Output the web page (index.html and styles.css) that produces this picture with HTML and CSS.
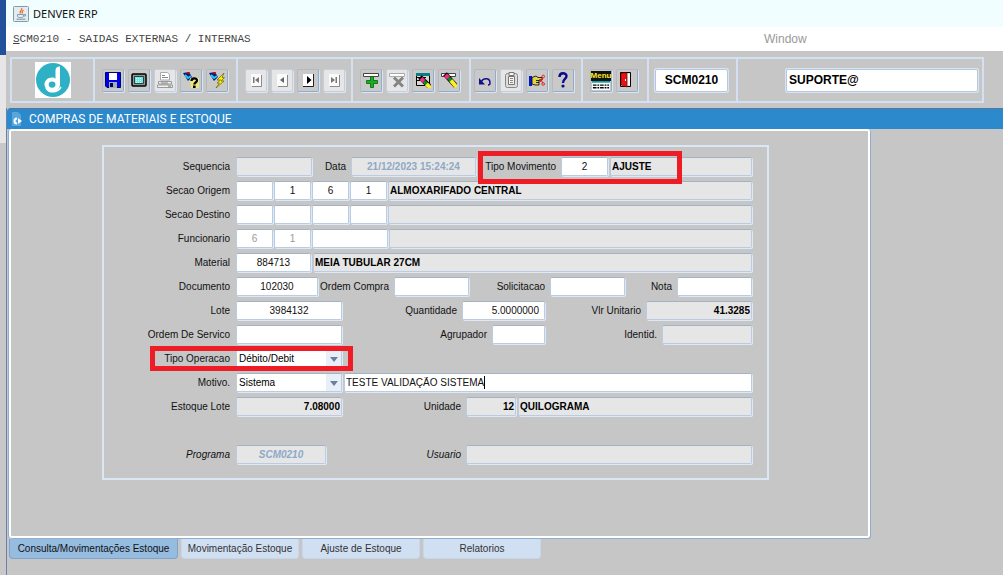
FILE: index.html
```html
<!DOCTYPE html>
<html lang="pt-BR">
<head>
  <meta charset="UTF-8">
  <meta name="viewport" content="width=device-width, initial-scale=1.0">
  <title>DENVER ERP</title>
  <link rel="stylesheet" href="styles.css">
</head>
<body>
  <div class="desktop"></div>
  <div class="window">
    <header class="title-bar">
      <svg class="java-icon" viewBox="0 0 16 16">
        <rect x="0.5" y="0.5" width="15" height="15" rx="1" fill="#e4ebf1" stroke="#8899a8"/>
        <path d="M8.500 2c1.500 2-3 2.800-1 5.500M10.500 4c-2 1.200-1.800 2-1 3.500" fill="none" stroke="#e8762c" stroke-width="1.300"/>
        <path d="M4.500 8.500h6v1.500c0 1-1 1.500-2 1.500H6.500c-1 0-2-.5-2-1.500zM11 8.500h1.500v1.500H11" fill="none" stroke="#7892a6" stroke-width=".9"/>
        <path d="M3.500 13.200h9" stroke="#7892a6"/>
      </svg>
      <span>DENVER ERP</span>
    </header>

    <nav class="menu-bar">
      <a class="menu-form" href="#"><u>S</u>CM0210 - SAIDAS EXTERNAS / INTERNAS</a>
      <a class="menu-window" href="#">Window</a>
    </nav>

    <div class="toolbar">
      <div class="group group-logo">
        <svg class="logo" viewBox="0 0 36 36">
          <rect width="36" height="36" fill="#fff"/>
          <circle cx="18" cy="18" r="17" fill="#2fb1c5"/>
          <path d="M25 4.500V22c0 5-3.500 7.500-7.500 7.500S9.500 26.700 9.500 22.500s3.500-7 7.500-7c1.500 0 2.500.4 3.500 1.200V8.500c0-2.500 1.500-4 4.500-4z" fill="#fff"/>
          <path d="M17 19.500c2.200 0 3.500 1.200 3.500 3 0 2-1.500 3.300-3.500 3.300s-3.300-1.300-3.300-3.200 1.300-3.100 3.300-3.100z" fill="#2fb1c5"/>
          <path d="M11 26c3 5 11 5.500 15-1" fill="none" stroke="#fff" stroke-width="1.500"/>
        </svg>
      </div>

      <div class="group group-file">
        <button class="tool" aria-label="Salvar">
          <svg viewBox="0 0 16 16"><path d="M.5.500h15v15H2l-1.500-1.500z" fill="#0000e8" stroke="#000070"/><path d="M4 1h8v7H4z" fill="#fff"/><path d="M4 10h8v6H4z" fill="#9fb0b8"/><path d="M5 11h3v4H5z" fill="#000050"/></svg>
        </button>
        <button class="tool" aria-label="Tela">
          <svg viewBox="0 0 16 16"><rect x="1" y="2" width="14" height="12" rx="1" fill="#8c9694" stroke="#000" stroke-width="1.500"/><path d="M3.500 4.500h9v7h-9z" fill="#6eeae6" stroke="#222" stroke-width=".8"/><path d="M5 6.500h6M5 8.500h6M5 10.500h6" stroke="#d8ffff" stroke-dasharray="1 1"/></svg>
        </button>
        <button class="tool" aria-label="Imprimir" disabled>
          <svg viewBox="0 0 16 16"><path d="M3.500.500h7l2 2V8h-9z" fill="#fff" stroke="#aaa"/><path d="M5 3.500h3M5 5.500h6" stroke="#888"/><path d="M1.500 9.500h13V12h-13zM.5 13h15v2.500H.5z" fill="#f2f2f2" stroke="#999"/><path d="M4 11h7M11 14.200h3" stroke="#888"/></svg>
        </button>
        <button class="tool" aria-label="Entrar consulta">
          <svg viewBox="0 0 16 16"><path d="M0 1l6-1 3 5-4 4z" fill="#081d7b"/><path d="M2 3l3 3 3-2" stroke="#27c9ef" stroke-width="2" fill="none"/><path d="M4 1h3" stroke="#e00" stroke-width="1.500"/><path d="M7 6h9v10H8z" fill="#efe87c"/><path d="M8.500 9c0-3.500 5.500-3.500 5.500-.5 0 2-2.700 2-2.700 4" fill="none" stroke="#000" stroke-width="2.200"/><path d="M10 13.500h2.600V16H10z"/></svg>
        </button>
        <button class="tool" aria-label="Executar consulta">
          <svg viewBox="0 0 16 16"><path d="M0 1l6-1 3 5-4 4z" fill="#081d7b"/><path d="M2 3l3 3 3-2" stroke="#27c9ef" stroke-width="2" fill="none"/><path d="M4 1h3" stroke="#e00" stroke-width="1.500"/><path d="M15 1L8 8h3.500L8 11h2.500L7 16l8-7h-3l3.500-3.500H13z" fill="#ffed00" stroke="#6c6200" stroke-width=".7"/></svg>
        </button>
      </div>

      <div class="group group-nav">
        <button class="tool" aria-label="Primeiro" disabled>
          <svg viewBox="0 0 16 16"><path d="M3 2h10v12H3z" fill="#fafafa"/><path d="M13.500 3v11.500H4" fill="none" stroke="#8b8b8b"/><path d="M5 5h1.500v6H5zM11 5v6L7 8z" fill="#777"/></svg>
        </button>
        <button class="tool" aria-label="Anterior" disabled>
          <svg viewBox="0 0 16 16"><path d="M3 2h10v12H3z" fill="#fafafa"/><path d="M13.500 3v11.500H4" fill="none" stroke="#8b8b8b"/><path d="M10 5v6L6 8z" fill="#666"/></svg>
        </button>
        <button class="tool" aria-label="Proximo">
          <svg viewBox="0 0 16 16"><path d="M3 2h10v12H3z" fill="#fff"/><path d="M13.500 2v12.500H3" fill="none" stroke="#222"/><path d="M7 4v8l4.500-4z"/></svg>
        </button>
        <button class="tool" aria-label="Ultimo" disabled>
          <svg viewBox="0 0 16 16"><path d="M3 2h10v12H3z" fill="#fafafa"/><path d="M13.500 3v11.500H4" fill="none" stroke="#8b8b8b"/><path d="M5 5v6l4-3zM9.500 5H11v6H9.500z" fill="#777"/></svg>
        </button>
      </div>

      <div class="group group-record">
        <button class="tool" aria-label="Inserir registro">
          <svg viewBox="0 0 16 16"><path d="M.5 1.500h15v3H.5z" fill="#fff" stroke="#444"/><path d="M7.500 4.500h3v4h4v3h-4v4h-3v-4h-4v-3h4z" fill="#18b020" stroke="#04640a" stroke-width=".8"/></svg>
        </button>
        <button class="tool" aria-label="Remover registro" disabled>
          <svg viewBox="0 0 16 16"><path d="M.5 1.500h15v3H.5z" fill="#fff" stroke="#aaa"/><path d="M5 5.500l9 9M14 5.500l-9 9" stroke="#858585" stroke-width="3"/></svg>
        </button>
        <button class="tool" aria-label="Limpar tela">
          <svg viewBox="0 0 16 16"><path d="M1.500 1.500h13v12h-13z" fill="#d8d8d8" stroke="#000"/><path d="M1 1h14v3H1z" fill="#087d83"/><path d="M1 5.500h10M1 8.500h5" stroke="#000"/><path d="M5 5l10 10" stroke="#000" stroke-width="5"/><path d="M6 6.500l3 3" stroke="#f02b80" stroke-width="4"/><path d="M9 9.500l3 3" stroke="#098d27" stroke-width="3.500"/><path d="M11.500 12l4 4" stroke="#ffed27" stroke-width="4"/></svg>
        </button>
        <button class="tool" aria-label="Limpar registro">
          <svg viewBox="0 0 16 16"><path d="M.5 1.500h14v3H.5z" fill="#fff" stroke="#444"/><path d="M4 2l11 12" stroke="#000" stroke-width="5"/><path d="M4.500 3l3 3" stroke="#f02b80" stroke-width="4"/><path d="M7.500 6l3 3" stroke="#098d27" stroke-width="3.500"/><path d="M10 8.500l5.500 6.500" stroke="#ffed27" stroke-width="4"/></svg>
        </button>
      </div>

      <div class="group group-edit">
        <button class="tool" aria-label="Desfazer">
          <svg viewBox="0 0 16 16"><path d="M4 10.500c2-5 9-5 9 .5 0 1.500-1 2-2 2" fill="none" stroke="#10108a" stroke-width="1.500"/><path d="M2 6v6.500h6z" fill="#10108a"/></svg>
        </button>
        <button class="tool" aria-label="Colar" disabled>
          <svg viewBox="0 0 16 16"><rect x="2.500" y="1.500" width="12" height="14" rx="2" fill="#ddd" stroke="#888"/><path d="M5.500 4.500h6v8h-6zM6 .5h5v3H6z" fill="#f5f5f5" stroke="#777"/><path d="M7 6.500h3M7 8.500h3M7 10.500h3" stroke="#888"/></svg>
        </button>
        <button class="tool" aria-label="Lista de valores">
          <svg viewBox="0 0 16 16"><path d="M0 4h3v10H0z" fill="#0018c4"/><path d="M3 5.500l4-1.500 2 1.500h4v2.500h-3v5H6l-3-1z" fill="#e2d24a" stroke="#000" stroke-width=".8"/><path d="M7 8.500h3M7 10.500h3" stroke="#000" stroke-width=".8"/><path d="M11 10l3-4M11 7l3 4" stroke="#d11"/><circle cx="14.200" cy="4.500" r="1.300" fill="none" stroke="#e22"/><circle cx="14.200" cy="12" r="1.300" fill="none" stroke="#e22"/></svg>
        </button>
        <button class="tool" aria-label="Ajuda">
          <svg viewBox="0 0 16 16"><path d="M4.500 5c0-5 7-4.500 7-1 0 3-3.500 3-3.500 7" fill="none" stroke="#0b0b8c" stroke-width="2.400"/><circle cx="8" cy="14" r="1.600" fill="#0b0b8c"/></svg>
        </button>
      </div>

      <div class="group group-exit">
        <button class="tool tool-menu" aria-label="Menu">
          <span>Menu</span>
          <svg viewBox="0 0 20 10"><path d="M0 0h20v2H0z" fill="#0ba0a5"/><path d="M0 2h20v8H0z" fill="#fff"/><path d="M1 4.500h18M1 7.500h18" stroke="#000" stroke-width="1.500" stroke-dasharray="4 1 2 1"/></svg>
        </button>
        <button class="tool" aria-label="Sair">
          <svg viewBox="0 0 16 16"><path d="M1.500 .5h10v14h-10z" fill="#ddd" stroke="#000"/><path d="M2 1h6v14l-6-2z" fill="#e81212" stroke="#700" stroke-width=".6"/><path d="M6.500 7v2" stroke="#fff"/><path d="M9 2h2v11H9z" fill="#fff"/></svg>
        </button>
      </div>

      <div class="group group-program">
        <input class="status" type="text" aria-label="Programa atual" value="SCM0210">
      </div>
      <div class="group group-user">
        <input class="status" type="text" aria-label="Usuario atual" value="SUPORTE@">
      </div>
    </div>

    <main class="module">
      <div class="module-title">
        <svg viewBox="0 0 12 14"><path d="M1 0h6l3 3v11H1z" fill="#58a6dc"/><path d="M6 5.500a3.500 3.500 0 1 0 0 7V10.500a1.500 1.500 0 1 1 0-3zM7 6l4 3-4 3z" fill="#fff"/></svg>
        <h1>COMPRAS DE MATERIAIS E ESTOQUE</h1>
      </div>

      <section class="tab-panel">
        <form class="form">
          <div class="row">
            <label class="main" for="sequencia">Sequencia</label>
            <input id="sequencia" class="w76" type="text" readonly>
            <label class="l35" for="data">Data</label>
            <input id="data" class="w125 bold faded center" type="text" value="21/12/2023 15:24:24" readonly>
            <div class="marked fill">
              <label class="l81" for="tipo-mov">Tipo Movimento</label>
              <input id="tipo-mov" class="w47 center" type="text" value="2">
              <input class="fill bold" type="text" aria-label="Descricao do movimento" value="AJUSTE" readonly>
              <span class="mark mark-movimento"></span>
            </div>
          </div>

          <div class="row section">
            <label class="main" for="origem">Secao Origem</label>
            <input id="origem" class="w37" type="text">
            <input class="w37 center" type="text" aria-label="Origem 2" value="1">
            <input class="w37 center" type="text" aria-label="Origem 3" value="6">
            <input class="w37 center" type="text" aria-label="Origem 4" value="1">
            <input class="fill bold" type="text" aria-label="Nome da origem" value="ALMOXARIFADO CENTRAL" readonly>
          </div>

          <div class="row section">
            <label class="main" for="destino">Secao Destino</label>
            <input id="destino" class="w37" type="text">
            <input class="w37" type="text" aria-label="Destino 2">
            <input class="w37" type="text" aria-label="Destino 3">
            <input class="w37" type="text" aria-label="Destino 4">
            <input class="fill" type="text" aria-label="Nome do destino" readonly>
          </div>

          <div class="row section">
            <label class="main" for="funcionario">Funcionario</label>
            <input id="funcionario" class="w37 center dim" type="text" value="6">
            <input class="w37 center dim" type="text" aria-label="Funcionario 2" value="1">
            <input class="w76" type="text" aria-label="Funcionario 3">
            <input class="fill" type="text" aria-label="Nome do funcionario" readonly>
          </div>

          <div class="row">
            <label class="main" for="material">Material</label>
            <input id="material" class="w75 center" type="text" value="884713">
            <input class="fill bold" type="text" aria-label="Nome do material" value="MEIA TUBULAR 27CM" readonly>
          </div>

          <div class="row">
            <label class="main" for="documento">Documento</label>
            <input id="documento" class="w82 center" type="text" value="102030">
            <label class="l72" for="ordem-compra">Ordem Compra</label>
            <input id="ordem-compra" class="w75" type="text">
            <label class="l77" for="solicitacao">Solicitacao</label>
            <input id="solicitacao" class="w75" type="text">
            <label class="l48" for="nota">Nota</label>
            <input id="nota" class="fill" type="text">
          </div>

          <div class="row">
            <label class="main" for="lote">Lote</label>
            <input id="lote" class="w106 center" type="text" value="3984132">
            <label class="l116" for="quantidade">Quantidade</label>
            <input id="quantidade" class="w83 right padded" type="text" value="5.0000000">
            <label class="l97" for="vlr">Vlr Unitario</label>
            <input id="vlr" class="fill bold right" type="text" value="41.3285" readonly>
          </div>

          <div class="row">
            <label class="main" for="ordem-servico">Ordem De Servico</label>
            <input id="ordem-servico" class="w106" type="text">
            <label class="l146" for="agrupador">Agrupador</label>
            <input id="agrupador" class="w53" type="text">
            <label class="l113" for="identid">Identid.</label>
            <input id="identid" class="fill" type="text" readonly>
          </div>

          <div class="row">
            <div class="marked">
              <label class="main" for="operacao">Tipo Operacao</label>
              <div class="combo w106">
                <select id="operacao"><option>Débito/Debit</option></select>
              </div>
              <span class="mark mark-operacao"></span>
            </div>
          </div>

          <div class="row">
            <label class="main" for="motivo">Motivo.</label>
            <div class="combo w106">
              <select id="motivo"><option>Sistema</option></select>
            </div>
            <div class="editing fill">
              <input class="fill" type="text" aria-label="Descricao do motivo" value="TESTE VALIDAÇÃO SISTEMA">
              <span class="caret"></span>
            </div>
          </div>

          <div class="row">
            <label class="main" for="estoque">Estoque Lote</label>
            <input id="estoque" class="w106 bold right" type="text" value="7.08000" readonly>
            <label class="l120" for="unidade">Unidade</label>
            <input id="unidade" class="w50 bold right" type="text" value="12" readonly>
            <input class="fill bold" type="text" aria-label="Nome da unidade" value="QUILOGRAMA" readonly>
          </div>

          <div class="row audit">
            <label class="main" for="programa">Programa</label>
            <input id="programa" class="w90 bold faded center" type="text" value="SCM0210" readonly>
            <label class="l136" for="usuario">Usuario</label>
            <input id="usuario" class="fill" type="text" readonly>
          </div>
        </form>
      </section>

      <div class="tabs" role="tablist">
        <button class="tab active" role="tab" aria-selected="true">Consulta/Movimentações Estoque</button>
        <button class="tab" role="tab">Movimentação Estoque</button>
        <button class="tab" role="tab">Ajuste de Estoque</button>
        <button class="tab" role="tab">Relatorios</button>
      </div>
    </main>
  </div>
</body>
</html>
```

FILE: styles.css
```css
* {
  box-sizing: border-box;
}

body {
  margin: 0;
  min-height: 100vh;
  display: flex;
  background: #c6c6c6;
  font-family: "Liberation Sans", Arial, sans-serif;
  font-size: 10px;
  color: #111;
}

button, input, select {
  font: inherit;
  color: inherit;
  margin: 0;
}

a {
  color: inherit;
  text-decoration: none;
}

/* strip of the desktop behind the window */
.desktop {
  width: 6px;
  background: linear-gradient(#22509a 0 55px, #e6e6e6 55px 143px, #c8c8ca 143px);
}

.window {
  flex: 1;
  min-width: 0;
  display: flex;
  flex-direction: column;
}

.title-bar {
  height: 27px;
  display: flex;
  align-items: center;
  gap: 4px;
  padding-left: 7px;
  background: #f0feff;
  font-family: "Noto Sans", sans-serif;
  font-size: 11px;
}

.java-icon {
  width: 16px;
  height: 16px;
}

.menu-bar {
  height: 24px;
  display: flex;
  align-items: center;
  background: #fff;
}

.menu-form {
  width: 758px;
  padding-left: 7px;
  font-family: "Liberation Mono", monospace;
  font-size: 11px;
  color: #444;
}

.menu-window {
  font-size: 12px;
  color: #999;
}

/* toolbar */
.toolbar {
  height: 46px;
  margin: 6px 19px 5px 4px;
  display: flex;
  border: 2px solid #d3e0f1;
}

.group {
  display: flex;
  align-items: center;
  gap: 4px;
  border-right: 2px solid #d3e0f1;
}

.group-logo {
  width: 83px;
  justify-content: center;
}

.logo {
  width: 36px;
  height: 36px;
}

.group-file {
  width: 143px;
  padding-left: 7px;
}

.group-nav {
  width: 115px;
  padding-left: 7px;
}

.group-record {
  width: 118px;
  padding-left: 7px;
}

.group-edit {
  width: 112px;
  padding-left: 3px;
}

.group-exit {
  width: 66px;
  padding-left: 7px;
}

.group-program {
  width: 89px;
  padding: 0 8px 0 6px;
}

.group-user {
  flex: 1;
  padding: 0 4px 0 48px;
  border-right: 0;
}

.tool {
  width: 22px;
  height: 23px;
  padding: 1px;
  display: flex;
  flex-direction: column;
  align-items: center;
  justify-content: center;
  background: #c9c9c9;
  border: 1px solid #b4bac2;
  border-right-color: #8faccd;
  border-bottom-color: #8faccd;
  border-radius: 2px;
  box-shadow: 1px 1px 0 #dbe6f4;
}

.tool:disabled {
  background: #e6e6e6;
  border-color: #c3cfdf;
}

.tool svg {
  width: 16px;
  height: 16px;
}

.tool-menu span {
  background: #111;
  color: #ffee20;
  font-size: 8px;
  font-weight: bold;
  line-height: 10px;
}

.tool-menu svg {
  width: 20px;
  height: 10px;
}

.status {
  width: 100%;
  height: 23px;
  padding: 0 2px;
  border: 1px solid #b5c8df;
  border-radius: 2px;
  box-shadow: 0 0 0 1px #d9e5f4;
  font-size: 12px;
  font-weight: bold;
  color: #000;
}

.group-program .status {
  text-align: center;
}

/* module window */
.module {
  flex: 1;
  border-left: 1px solid #6883a8;
}

.module-title {
  height: 21px;
  display: flex;
  align-items: center;
  gap: 6px;
  padding-left: 4px;
  background: #2c89cb;
  border-top: 1px solid #55779c;
  border-top-left-radius: 4px;
  color: #fff;
}

.module-title svg {
  width: 12px;
  height: 14px;
}

h1 {
  margin: 0;
  font-family: Roboto, sans-serif;
  font-size: 12px;
  font-weight: normal;
}

.tab-panel {
  margin-right: 133px;
  margin-left: 2px;
  padding: 14px 99px 56px 91px;
  border: 2px solid #fff;
  border-radius: 3px;
  box-shadow: 1px 1px 0 #8fadd0, -1px 0 0 #8fadd0;
}

.form {
  display: flex;
  flex-direction: column;
  gap: 5px;
  padding: 10px 15px 14px 0;
  border: 2px solid #dce7f5;
}

.row, .marked, .editing {
  display: flex;
  align-items: center;
  gap: 2px;
}

.row {
  height: 19px;
}

.section {
  gap: 1px;
}

.marked, .editing {
  position: relative;
  min-width: 0;
}

.audit {
  margin-top: 24px;
  font-style: italic;
}

label {
  flex: none;
  padding-right: 3px;
  text-align: right;
  white-space: nowrap;
}

.main {
  width: 130px;
  padding-right: 4px;
}

.section .main {
  width: 131px;
  padding-right: 5px;
}

.form input, .combo {
  flex: none;
  height: 19px;
  min-width: 0;
  padding: 0 1px;
  background: #fff;
  border: 1px solid #b9cce4;
  border-top-color: #a3b3c6;
  border-radius: 2px;
  box-shadow: 1px 1px 0 #dfe9f6;
}

.form input:read-only {
  background: #e6e6e6;
}

.form .fill {
  flex: 1;
}

.form .padded {
  padding-right: 5px;
}

.bold {
  font-weight: bold;
  color: #000;
}

.faded {
  color: #8ea9c8;
}

.dim {
  color: #999;
}

.center {
  text-align: center;
}

.right {
  text-align: right;
}

.w37 { width: 37px; }
.w47 { width: 47px; }
.w50 { width: 50px; }
.w53 { width: 53px; }
.w75 { width: 75px; }
.w76 { width: 76px; }
.w82 { width: 82px; }
.w83 { width: 83px; }
.w90 { width: 90px; }
.w106 { width: 106px; }
.w125 { width: 125px; }

.l35 { width: 35px; }
.l48 { width: 48px; }
.l72 { width: 72px; }
.l77 { width: 77px; }
.l81 { width: 81px; }
.l97 { width: 97px; }
.l113 { width: 113px; }
.l116 { width: 116px; }
.l120 { width: 120px; }
.l136 { width: 136px; }
.l146 { width: 146px; }

.combo {
  position: relative;
  padding: 0;
}

.combo select {
  width: 100%;
  height: 100%;
  padding: 0 2px;
  appearance: none;
  background: linear-gradient(90deg, transparent 86%, #e8eff8 86%);
  border: 0;
  color: #000;
}

.combo::after {
  content: "";
  position: absolute;
  right: 3px;
  top: 7px;
  width: 8px;
  height: 5px;
  background: #68809c;
  clip-path: polygon(0 0, 100% 0, 50% 100%);
  pointer-events: none;
}

.caret {
  position: absolute;
  left: 140px;
  top: 3px;
  width: 1px;
  height: 13px;
  background: #000;
}

/* red call-outs over the fields */
.mark {
  position: absolute;
  border: 5px solid #ee1c25;
  pointer-events: none;
}

.mark-movimento {
  left: 0;
  top: -6px;
  width: 204px;
  height: 33px;
}

.mark-operacao {
  left: 46px;
  top: -3px;
  width: 203px;
  height: 25px;
}

/* bottom tabs */
.tabs {
  display: flex;
  gap: 3px;
  margin-top: 1px;
  padding-left: 2px;
}

.tab {
  width: 118px;
  height: 20px;
  padding: 0;
  background: #d0dff2;
  border: 1px solid #c9d6e8;
  border-top: 0;
  border-radius: 0 0 4px 4px;
  color: #333;
  white-space: nowrap;
}

.tab.active {
  width: 169px;
  background: #96bce0;
  border-color: #7fa3ca;
  color: #111;
}
```
